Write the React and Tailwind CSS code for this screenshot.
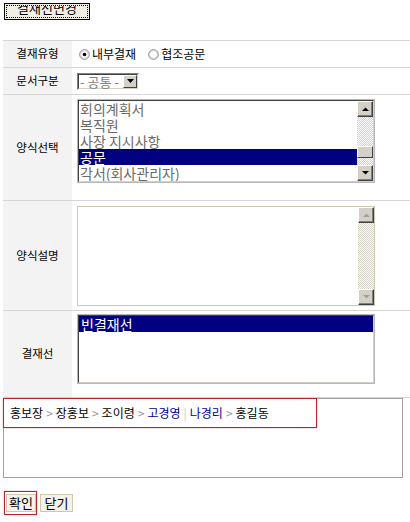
import React from "react";

const font = { fontFamily: '"Noto Sans CJK KR", "Noto Sans", sans-serif' };

function Arrow({ dir = "up", disabled }) {
  const pts = dir === "up" ? "1,5 4.5,1.5 8,5" : "1,1 4.5,4.5 8,1";
  return (
    <div className="flex h-[16px] w-[16px] items-center justify-center border border-t-white border-l-white border-r-[#404040] border-b-[#404040] bg-[#d4d0c8] shadow-[inset_-1px_-1px_0_#808080]">
      <svg width="9" height="6" viewBox="0 0 9 6">
        <polygon points={pts} fill={disabled ? "#a0a0a0" : "#000"} />
      </svg>
    </div>
  );
}

function Track({ children }) {
  return (
    <div className="flex-1 bg-[repeating-conic-gradient(#d4d0c8_0_25%,#ffffff_0_50%)] bg-[length:2px_2px]">
      {children}
    </div>
  );
}

function Scrollbar({ disabled, thumbTop }) {
  return (
    <div className="flex h-full w-[16px] shrink-0 flex-col">
      <Arrow dir="up" disabled={disabled} />
      <Track>
        {thumbTop !== undefined && (
          <div className="relative h-full">
            <div
              className="absolute left-0 h-[12px] w-[16px] border border-t-white border-l-white border-r-[#404040] border-b-[#404040] bg-[#d4d0c8]"
              style={{ top: thumbTop }}
            />
          </div>
        )}
      </Track>
      <Arrow dir="down" disabled={disabled} />
    </div>
  );
}

function Inset({ className, children }) {
  return (
    <div className={"border border-[#b8b8b8] " + className}>
      <div className="flex h-full border border-t-[#404040] border-l-[#404040] border-b-[#d4d0c8] border-r-[#d4d0c8]">
        {children}
      </div>
    </div>
  );
}

function Row({ label, h, children }) {
  return (
    <div className={"flex border-b border-[#d6d6d6] " + h}>
      <div className="flex w-[69px] shrink-0 items-center justify-center bg-[#f3f3f3] text-[11.5px] text-black">
        {label}
      </div>
      <div className="flex-1 pl-[5px]">{children}</div>
    </div>
  );
}

function Radio({ checked }) {
  return (
    <svg width="11" height="11" viewBox="0 0 11 11">
      <circle cx="5.5" cy="5.5" r="4.8" fill="#fff" stroke="#808080" />
      <circle cx="5.5" cy="5.5" r="3.8" fill="none" stroke="#d4d0c8" strokeWidth="0.8" />
      {checked && <circle cx="5.5" cy="5.5" r="1.8" fill="#000" />}
    </svg>
  );
}

const forms = ["회의계획서", "복직원", "사장 지시사항", "공문", "각서(회사관리자)"];

const Sep = () => <span className="mx-[3px] text-[#999]">&gt;</span>;

export default function App() {
  return (
    <div className="h-[522px] w-[410px] overflow-hidden bg-white" style={font}>
      <div className="pl-[4px] pt-[3px]">
        <div className="h-[17px] w-[86px] border border-black bg-[#f2f0e6] p-[1px]">
          <div className="flex h-full items-start justify-center overflow-hidden border border-dotted border-black text-[13px] leading-[10px] text-black">
            <span className="-mt-[3px]">결재선변경</span>
          </div>
        </div>
      </div>

      <div className="ml-[3px] mt-[20px] border-t border-[#d6d6d6]">
        <Row label="결재유형" h="h-[27px]">
          <div className="flex h-full items-center text-[12px] text-black">
            <span className="ml-[2px] mr-[2px] flex"><Radio checked /></span>
            <span>내부결재</span>
            <span className="ml-[12px] mr-[2px] flex"><Radio /></span>
            <span>협조공문</span>
          </div>
        </Row>

        <Row label="문서구분" h="h-[27px]">
          <div className="flex h-full items-center">
            <div className="flex h-[17px] w-[62px] border border-t-[#808080] border-l-[#808080] border-b-white border-r-white">
              <div className="flex flex-1 items-center border border-t-[#404040] border-l-[#404040] border-b-[#d4d0c8] border-r-[#d4d0c8] bg-white">
                <span className="flex-1 whitespace-nowrap pl-[1px] text-[13px] leading-[13px] text-[#808080]">- 공통 -</span>
                <div className="flex h-full w-[14px] shrink-0 items-center justify-center border border-t-white border-l-white border-r-[#404040] border-b-[#404040] bg-[#d4d0c8]">
                  <svg width="7" height="4" viewBox="0 0 7 4">
                    <polygon points="0,0 7,0 3.5,4" fill="#000" />
                  </svg>
                </div>
              </div>
            </div>
          </div>
        </Row>

        <Row label="양식선택" h="h-[106px]">
          <div className="pt-[4px]">
            <Inset className="h-[84px] w-[298px]">
              <div className="flex-1 overflow-hidden bg-white">
                {forms.map((f) => (
                  <div
                    key={f}
                    className={
                      "h-[16px] whitespace-nowrap pl-[1px] text-[14px] leading-[16px] " +
                      (f === "공문" ? "bg-[#000080] text-white" : "text-[#6a6a6a]")
                    }
                  >
                    {f}
                  </div>
                ))}
              </div>
              <Scrollbar thumbTop={29} />
            </Inset>
          </div>
        </Row>

        <Row label="양식설명" h="h-[110px]">
          <div className="pt-[5px]">
            <div className="flex h-[100px] w-[298px] border border-[#cdc8b4] bg-white">
              <div className="flex-1" />
              <Scrollbar disabled />
            </div>
          </div>
        </Row>

        <Row label="결재선" h="h-[87px]">
          <div className="pt-[3px]">
            <Inset className="h-[70px] w-[298px]">
              <div className="flex-1 bg-white">
                <div className="h-[16px] bg-[#000080] pl-[2px] text-[14px] leading-[16px] text-white">
                  빈결재선
                </div>
              </div>
            </Inset>
          </div>
        </Row>
      </div>

      <div className="relative ml-[3px] h-[80px] w-[400px] border border-[#a0a0a0]">
        <div className="absolute -left-px -top-px flex h-[30px] w-[314px] items-center whitespace-nowrap border border-[#b3262b] pl-[6px] text-[12px] text-black shadow-[0_0_2px_#f0b0b0]">
          <span>홍보장</span>
          <Sep />
          <span>장홍보</span>
          <Sep />
          <span>조이령</span>
          <Sep />
          <span className="text-[#000099]">고경영</span>
          <span className="mx-[3px] text-[#c8c8c8]">|</span>
          <span className="text-[#000099]">나경리</span>
          <Sep />
          <span>홍길동</span>
        </div>
      </div>

      <div className="ml-[4px] mt-[13px] flex items-center gap-[3px]">
        <div className="flex h-[24px] w-[33px] items-center border border-[#b3262b] shadow-[0_0_2px_#f0b0b0]">
          <button className="ml-[1px] h-[18px] w-[30px] border border-[#cfc8b0] bg-[#f4f2ea] text-[13px] leading-[14px] text-black">
            확인
          </button>
        </div>
        <button className="h-[18px] w-[33px] border border-[#cfc8b0] bg-[#f4f2ea] text-[13px] leading-[14px] text-black">
          닫기
        </button>
      </div>
    </div>
  );
}
